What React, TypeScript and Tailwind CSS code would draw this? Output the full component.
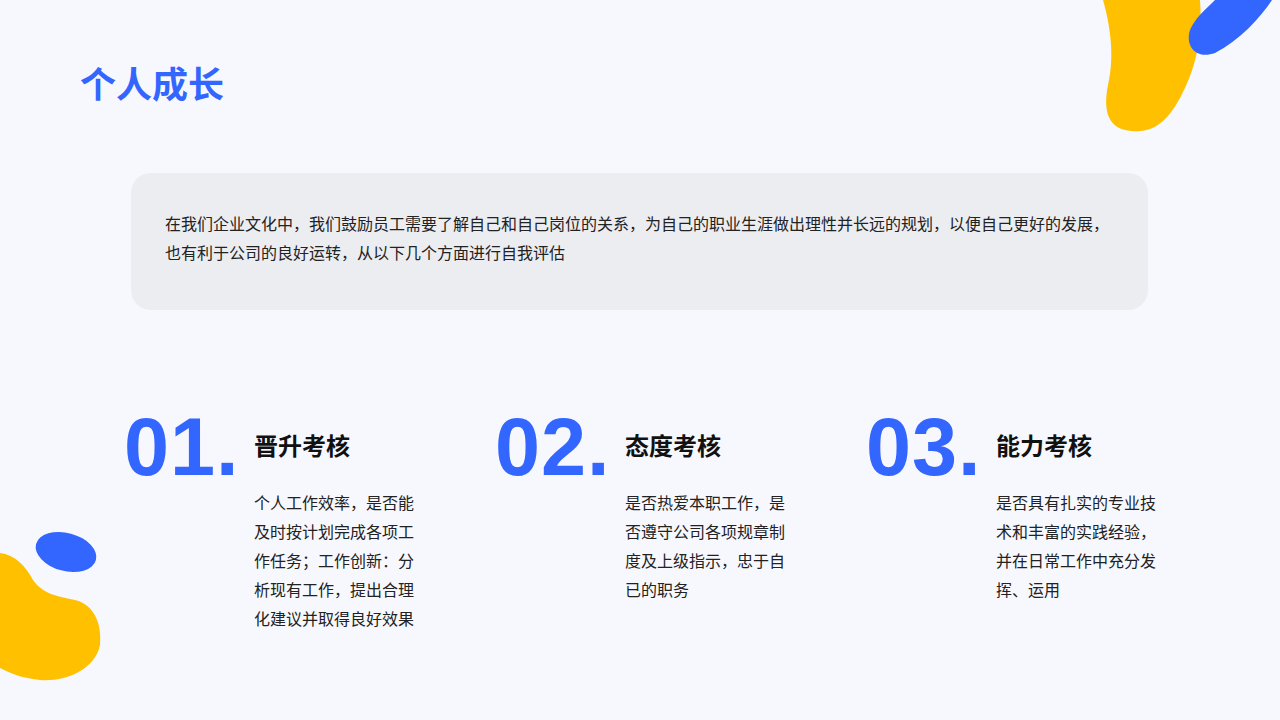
export default function App() {
  const cols = [
    { n: "01", t: "晋升考核", d: "个人工作效率，是否能及时按计划完成各项工作任务；工作创新：分析现有工作，提出合理化建议并取得良好效果" },
    { n: "02", t: "态度考核", d: "是否热爱本职工作，是否遵守公司各项规章制度及上级指示，忠于自已的职务" },
    { n: "03", t: "能力考核", d: "是否具有扎实的专业技术和丰富的实践经验，并在日常工作中充分发挥、运用" },
  ];
  return (
    <div className="relative w-[1280px] h-[720px] overflow-hidden bg-[#F7F8FD]" style={{ fontFamily: '"Noto Sans CJK SC", "Noto Sans", sans-serif' }}>
      <svg className="absolute left-0 top-0" width="1280" height="720" viewBox="0 0 1280 720">
        <path d="M1103 0 L1200 0 C1203 40 1195 70 1180 98 C1165 125 1150 135 1125 130 C1108 126 1103 110 1108 85 C1115 55 1110 25 1103 0 Z" fill="#FFC000" />
        <path d="M1215 0 L1272 0 C1260 18 1240 40 1215 53 C1195 60 1185 45 1190 30 C1195 18 1205 10 1215 0 Z" fill="#3366FF" />
        <path d="M0 553 C15 555 25 565 33 580 C42 593 55 596 75 600 C95 605 102 625 100 645 C95 670 65 682 40 680 C20 678 8 672 0 668 Z" fill="#FFC000" />
        <ellipse cx="66" cy="552" rx="31" ry="19" transform="rotate(15 66 552)" fill="#3366FF" />
      </svg>
      <div className="relative flex flex-col">
        <h1 className="ml-[80px] mt-[58px] text-[36px] leading-[48px] font-bold text-[#3366FF]">个人成长</h1>
        <div className="ml-[131px] mt-[67px] w-[1017px] h-[137px] rounded-[20px] bg-[#ECEDF1] px-[34px] pt-[36px] text-[16px] leading-[29px] text-[#222]">
          在我们企业文化中，我们鼓励员工需要了解自己和自己岗位的关系，为自己的职业生涯做出理性并长远的规划，以便自己更好的发展，也有利于公司的良好运转，从以下几个方面进行自我评估
        </div>
        <div className="ml-[124px] mt-[92px] flex">
          {cols.map((c) => (
            <div key={c.n} className="w-[371px] flex">
              <div className="w-[130px] text-[81px] leading-[90px] font-bold text-[#3366FF] tracking-[1px]" style={{ fontFamily: '"Liberation Sans", Arial, sans-serif' }}>{c.n}.</div>
              <div className="flex flex-col pt-[26px]">
                <div className="text-[24px] leading-[34px] font-bold text-[#111]">{c.t}</div>
                <div className="mt-[26px] w-[164px] text-[16px] leading-[29px] text-[#222]">{c.d}</div>
              </div>
            </div>
          ))}
        </div>
      </div>
    </div>
  );
}
